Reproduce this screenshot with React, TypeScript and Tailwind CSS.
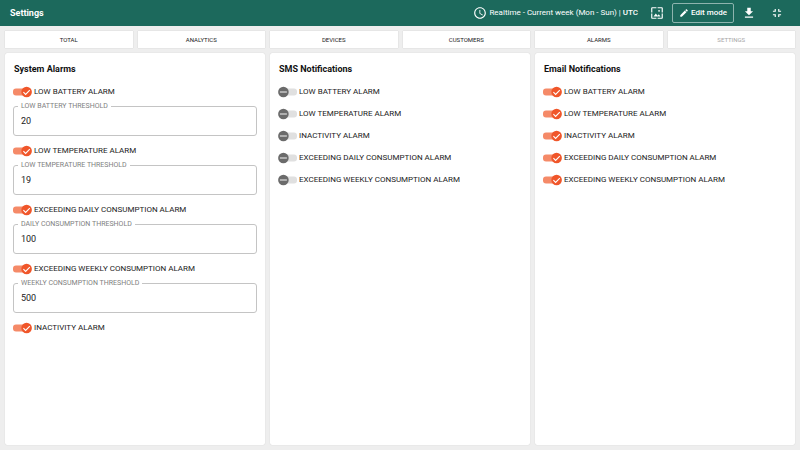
import { useState } from "react";
import { MdAccessTime, MdEdit, MdFileDownload, MdFullscreenExit, MdWallpaper } from "react-icons/md";

const tabs = ["TOTAL", "ANALYTICS", "DEVICES", "CUSTOMERS", "ALARMS", "SETTINGS"];

const systemAlarms = [
  { label: "LOW BATTERY ALARM", id: "battery", field: "LOW BATTERY THRESHOLD", value: "20" },
  { label: "LOW TEMPERATURE ALARM", id: "temperature", field: "LOW TEMPERATURE THRESHOLD", value: "19" },
  { label: "EXCEEDING DAILY CONSUMPTION ALARM", id: "daily", field: "DAILY CONSUMPTION THRESHOLD", value: "100" },
  { label: "EXCEEDING WEEKLY CONSUMPTION ALARM", id: "weekly", field: "WEEKLY CONSUMPTION THRESHOLD", value: "500" },
];

const notifications = [
  "LOW BATTERY ALARM",
  "LOW TEMPERATURE ALARM",
  "INACTIVITY ALARM",
  "EXCEEDING DAILY CONSUMPTION ALARM",
  "EXCEEDING WEEKLY CONSUMPTION ALARM",
];

function Toggle({ label, initial }: { label: string; initial: boolean }) {
  const [on, setOn] = useState(initial);
  return (
    <label className="relative flex h-3 w-fit cursor-pointer items-center gap-0.5 text-[8px] leading-3 whitespace-nowrap text-[#212121]">
      <input
        type="checkbox"
        role="switch"
        className="sr-only"
        checked={on}
        onChange={(e) => setOn(e.target.checked)}
      />
      <svg viewBox="0 0 19 12" className="h-3 w-[19px] shrink-0" aria-hidden="true">
        {on ? (
          <>
            <rect x="0" y="2.5" width="18" height="7" rx="3" fill="#f58a68" />
            <circle cx="13.6" cy="6" r="5.3" fill="#f0562a" />
            <path d="M10.4 6.2l2.2 2.2 4.2-4.3" fill="none" stroke="#fff" strokeWidth="1.1" />
          </>
        ) : (
          <>
            <rect x="1" y="2.5" width="18" height="7" rx="3" fill="#e0e0e0" />
            <circle cx="5.4" cy="6" r="5.3" fill="#6b6b6b" />
            <path d="M1.9 6h7" fill="none" stroke="#d4d4d4" strokeWidth="1.3" />
          </>
        )}
      </svg>
      <span>{label}</span>
    </label>
  );
}

function Threshold({ id, label, initial }: { id: string; label: string; initial: string }) {
  const [value, setValue] = useState(initial);
  return (
    <fieldset className="h-[33px] min-w-0 rounded-[3px] border border-[#c4c4c4] px-1">
      <legend className="h-1.5 px-[3px] text-[7px] leading-[6px] text-[#808080]">
        <label htmlFor={id}>{label}</label>
      </legend>
      <input
        id={id}
        type="text"
        inputMode="numeric"
        value={value}
        onChange={(e) => setValue(e.target.value)}
        className="block h-[23px] w-full bg-transparent px-[3px] text-[9px] text-[#212121] outline-none"
      />
    </fieldset>
  );
}

function Card({ title, children }: { title: string; children: React.ReactNode }) {
  return (
    <section className="min-w-0 rounded-[2px] bg-white px-2 pt-2.5 shadow-[0_0_1px_rgba(0,0,0,0.2)]">
      <h2 className="mb-[11px] px-px text-[9px] leading-3 font-bold text-[#111]">{title}</h2>
      {children}
    </section>
  );
}

export default function App() {
  return (
    <div className="flex min-h-screen flex-col bg-[#eeeeee] font-[Roboto,sans-serif]">
      <header className="flex h-[26px] items-center bg-[#1c695c] pr-4 pl-2.5 text-white">
        <h1 className="flex-1 text-[9px] leading-3 font-bold">Settings</h1>
        <button type="button" className="flex items-center gap-0.5 text-[8px]">
          <MdAccessTime size={14} />
          <span>
            Realtime - Current week (Mon - Sun) | <b className="font-medium">UTC</b>
          </span>
        </button>
        <button type="button" aria-label="Dashboard image" className="ml-3">
          <MdWallpaper size={14} />
        </button>
        <button
          type="button"
          className="ml-2 flex h-5 items-center gap-0.5 rounded-[2px] border border-[#8db4ae] px-1.5 text-[8px] font-medium"
        >
          <MdEdit size={10} />
          Edit mode
        </button>
        <button type="button" aria-label="Download" className="ml-2">
          <MdFileDownload size={14} />
        </button>
        <button type="button" aria-label="Exit fullscreen" className="ml-3.5">
          <MdFullscreenExit size={14} />
        </button>
      </header>
      <main className="flex flex-1 flex-col gap-[5px] p-[5px]">
        <nav className="grid grid-cols-6 gap-[5px]">
          {tabs.map((tab) => (
            <button
              key={tab}
              type="button"
              disabled={tab === "SETTINGS"}
              className="h-[17px] bg-white text-[6px] text-[#212121] shadow-[0_0_1px_rgba(0,0,0,0.2)] disabled:text-[#a6a6a6]"
            >
              {tab}
            </button>
          ))}
        </nav>
        <div className="grid flex-1 grid-cols-3 gap-[5px]">
          <Card title="System Alarms">
            <div className="flex flex-col gap-[9px]">
              {systemAlarms.map((a) => (
                <div key={a.id} className="flex flex-col gap-[5px]">
                  <Toggle label={a.label} initial />
                  <Threshold id={a.id} label={a.field} initial={a.value} />
                </div>
              ))}
              <Toggle label="INACTIVITY ALARM" initial />
            </div>
          </Card>
          <Card title="SMS Notifications">
            <div className="flex flex-col gap-2.5">
              {notifications.map((n) => (
                <Toggle key={n} label={n} initial={false} />
              ))}
            </div>
          </Card>
          <Card title="Email Notifications">
            <div className="flex flex-col gap-2.5">
              {notifications.map((n) => (
                <Toggle key={n} label={n} initial />
              ))}
            </div>
          </Card>
        </div>
      </main>
    </div>
  );
}
